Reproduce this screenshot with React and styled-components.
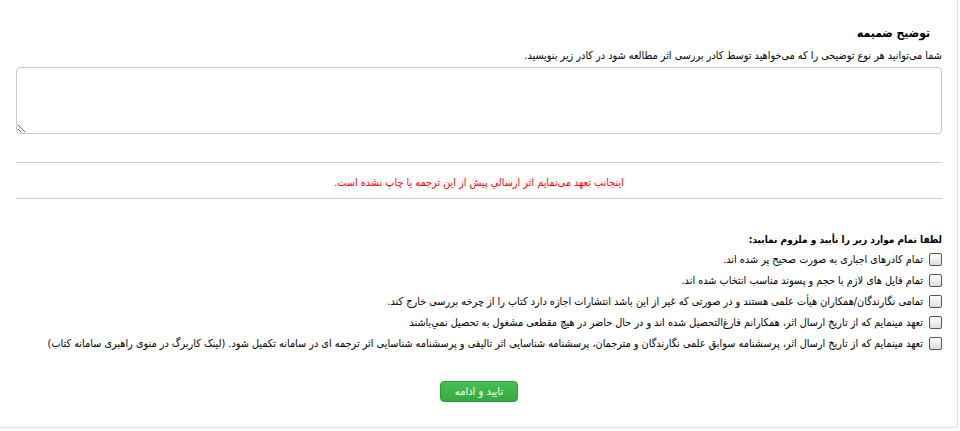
import React, { useState } from "react";
import styled, { createGlobalStyle } from "styled-components";

const GlobalStyle = createGlobalStyle`
    html, body {
        margin: 0;
        padding: 0;
        background: #ffffff;
    }
    body {
        font-family: "DejaVu Sans Condensed", "DejaVu Sans", sans-serif;
        font-stretch: semi-condensed;
        font-size: 10.8px;
        color: #000;
    }
`

const Card = styled.div`
    box-sizing: border-box;
    direction: rtl;
    width: 958px;
    min-height: 428px;
    padding: 24px 15px 24px 16px;
    border-right: 1px solid #dcdcdc;
    border-bottom: 1px solid #dcdcdc;
    border-bottom-right-radius: 4px;
`

const Title = styled.h3`
    margin: 0 12px 5px 0;
    font-size: 12px;
    font-weight: bold;
    line-height: 18px;
`

const Hint = styled.p`
    margin: 0;
    line-height: 18px;
`

const TextArea = styled.textarea`
    display: block;
    box-sizing: border-box;
    width: 100%;
    height: 67px;
    margin-top: 2px;
    border: 1px solid #c8c8c8;
    border-radius: 4px;
    resize: vertical;
    font-family: inherit;
`

const Notice = styled.div`
    margin-top: 28px;
    padding-top: 5px;
    border-top: 1px solid #cfcfcf;
    border-bottom: 1px solid #cfcfcf;
    line-height: 30px;
    text-align: center;
    color: #ff0000;
`

const Terms = styled.div`
    margin-top: 32px;
`

const TermsTitle = styled.div`
    font-size: 10px;
    font-weight: bold;
    line-height: 18px;
`

const Row = styled.label`
    display: flex;
    align-items: center;
    gap: 6px;
    height: 21px;
`

const Box = styled.input.attrs({ type: "checkbox" })`
    appearance: none;
    flex: none;
    box-sizing: border-box;
    width: 13px;
    height: 13px;
    margin: 0;
    border: 1px solid #555;
    border-radius: 2px;
    background: linear-gradient(#fdfdfd, #dedede);
    cursor: pointer;
    &:checked {
        background: linear-gradient(#5a9bd5, #2f6fb0);
    }
`

const Footer = styled.div`
    display: flex;
    justify-content: center;
    margin-top: 27px;
`

const Button = styled.button`
    box-sizing: border-box;
    width: 78px;
    height: 21px;
    padding: 0;
    border: 1px solid #2d9a3a;
    border-radius: 4px;
    background: linear-gradient(#47bf52, #35a942);
    color: #fff;
    font-family: inherit;
    font-stretch: inherit;
    font-size: 11px;
    cursor: pointer;
`

const terms = [
    "تمام کادرهای اجباری به صورت صحیح پر شده اند.",
    "تمام فایل های لازم با حجم و پسوند مناسب انتخاب شده اند.",
    "تمامی نگارندگان/همکاران هیأت علمی هستند و در صورتی که غیر از این باشد انتشارات اجازه دارد کتاب را از چرخه بررسی خارج کند.",
    "تعهد مینمایم که از تاریخ ارسال اثر، همکارانم فارغ‌التحصیل شده اند و در حال حاضر در هیچ مقطعی مشغول به تحصیل نمي‌باشند",
    "تعهد مینمایم که از تاریخ ارسال اثر، پرسشنامه سوابق علمی نگارندگان و مترجمان، پرسشنامه شناسایی اثر تالیفی و پرسشنامه شناسایی اثر ترجمه ای در سامانه تکمیل شود. (لینک کاربرگ در منوی راهبری سامانه کتاب)",
];

const App = () => {
    const [checked, setChecked] = useState(terms.map(() => false));

    const toggle = (i) => {
        setChecked(checked.map((c, j) => (j === i ? !c : c)));
    }

    return (
        <>
            <GlobalStyle />
            <Card>
                <Title>توضیح ضمیمه</Title>
                <Hint>شما می‌توانید هر نوع توضیحی را که می‌خواهید توسط کادر بررسی اثر مطالعه شود در کادر زیر بنویسید.</Hint>
                <TextArea />
                <Notice>اینجانب تعهد می‌نمایم اثر ارسالي پیش از این ترجمه یا چاپ نشده است.</Notice>
                <Terms>
                    <TermsTitle>لطفا تمام موارد زیر را تأیید و ملزوم نمایید:</TermsTitle>
                    {terms.map((t, i) => (
                        <Row key={i}>
                            <Box checked={checked[i]} onChange={() => toggle(i)} />
                            <span>{t}</span>
                        </Row>
                    ))}
                </Terms>
                <Footer>
                    <Button type="button">تایید و ادامه</Button>
                </Footer>
            </Card>
        </>
    );
}

export default App;
